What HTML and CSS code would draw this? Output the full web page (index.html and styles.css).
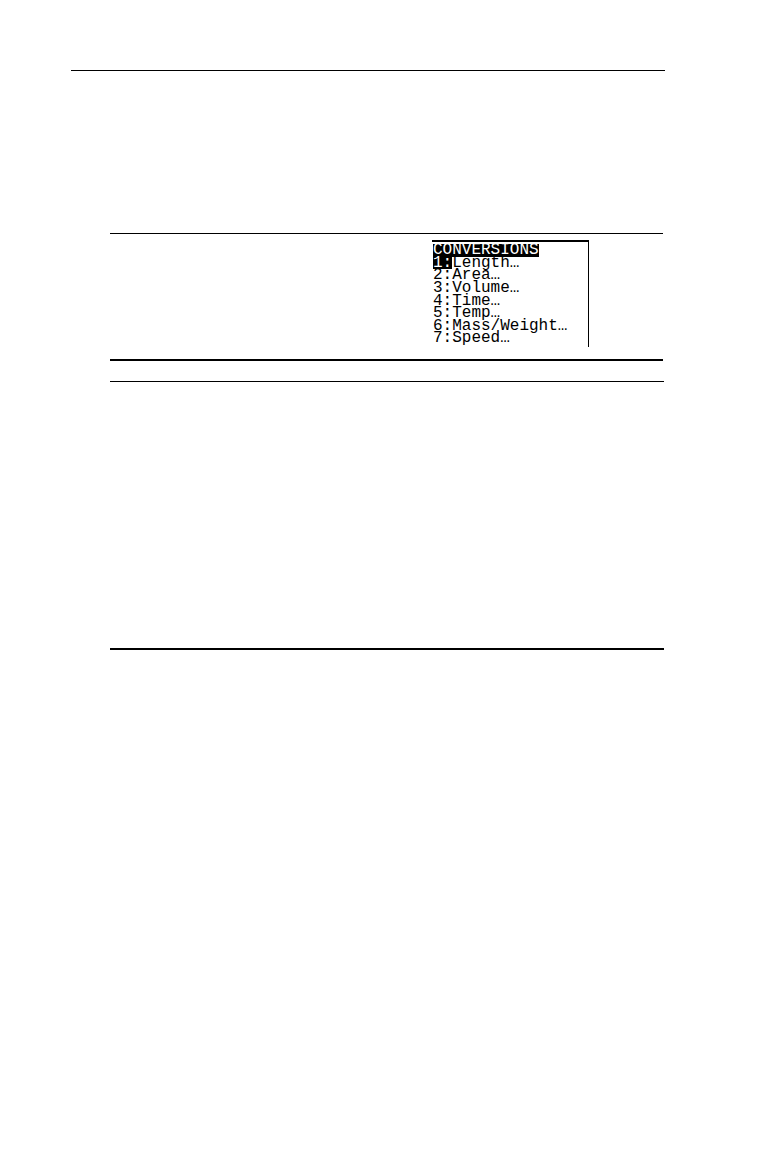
FILE: index.html
```
<!DOCTYPE html>
<html lang="en">
<head>
    <meta charset="UTF-8">
    <meta name="viewport" content="width=device-width, initial-scale=1.0">
    <title>Conversions</title>
    <link rel="stylesheet" href="styles.css">
</head>
<body>

<div class="page">
    <header class="page-header"></header>

    <main class="content">
        <section class="menu-section">
            <div class="screen">
                <div class="row"><span class="inverse">CONVERSIONS</span></div>
                <div class="row"><span class="inverse">1:</span>Length…</div>
                <div class="row">2:Area…</div>
                <div class="row">3:Volume…</div>
                <div class="row">4:Time…</div>
                <div class="row">5:Temp…</div>
                <div class="row">6:Mass/Weight…</div>
                <div class="row">7:Speed…</div>
            </div>
        </section>

        <section class="table-section">
            <div class="table-head"></div>
            <div class="table-body"></div>
        </section>
    </main>
</div>

</body>
</html>
```

FILE: styles.css
```
body { margin: 0; background: white; color: black; }
.page { padding: 70px 105px 0 71px; }
.page-header { border-top: 1px solid black; height: 162px; }
.content { padding: 0 1px 0 39px; }

.menu-section { display: flex; justify-content: flex-end; margin-right: 1px; padding: 6px 74px 12px 0; border-top: 1px solid black; border-bottom: 2px solid black; }
.screen { display: grid; grid-auto-rows: 1fr; box-sizing: border-box; width: 157px; height: 107px; padding: 2px 0 2px 1px; border-top: 2px solid black; border-right: 1px solid black; font-family: "Liberation Mono", monospace; font-size: 16px; line-height: 12px; }
.row { display: flex; white-space: nowrap; }
.inverse { background: black; color: white; }

.table-head { height: 20px; border-bottom: 1px solid black; }
.table-body { height: 266px; border-bottom: 2px solid black; }
```
